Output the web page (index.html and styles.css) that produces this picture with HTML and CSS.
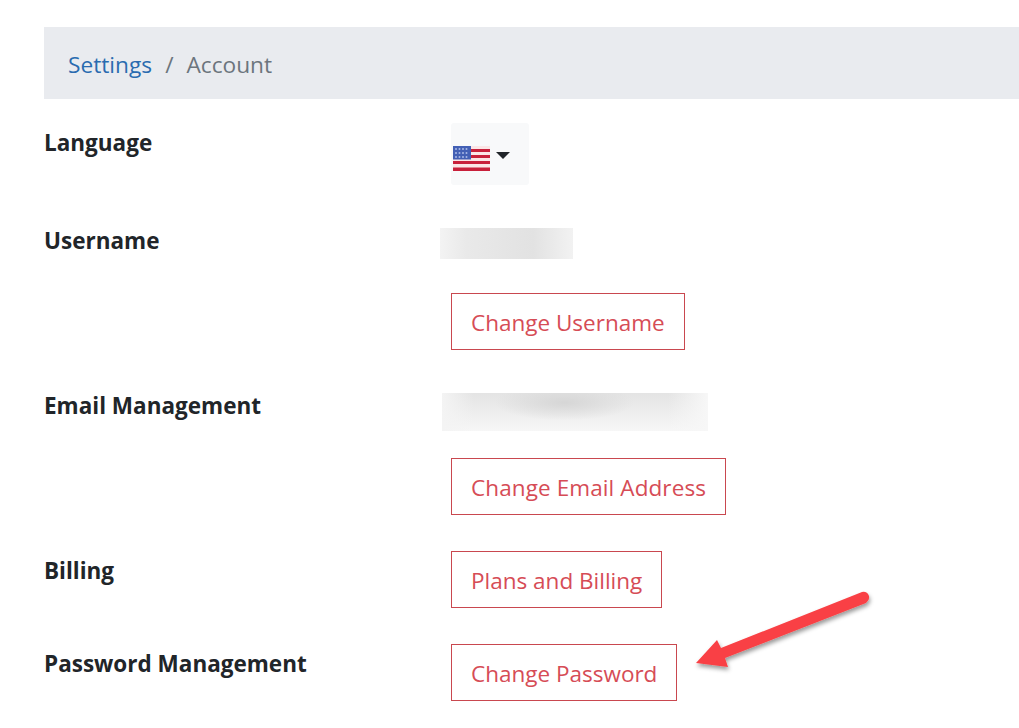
FILE: index.html
```html
<!DOCTYPE html>
<html lang="en">
<head>
  <meta charset="UTF-8">
  <meta name="viewport" content="width=device-width, initial-scale=1.0">
  <title>Account Settings</title>
  <link rel="stylesheet" href="styles.css">
</head>
<body>
  <div class="page">
    <nav class="breadcrumb">
      <a class="crumb-link" href="#">Settings</a>
      <span class="crumb-sep">/</span>
      <span class="crumb-current">Account</span>
    </nav>

    <div class="settings">
      <div class="row row-language">
        <div class="label">Language</div>
        <div class="value">
          <button class="lang-button">
            <svg class="flag" viewBox="0 0 37 25" width="37" height="25">
              <rect width="37" height="25" fill="#fbe6e6"/>
              <rect y="3" width="37" height="3" fill="#c8203a"/>
              <rect y="9" width="37" height="3" fill="#c8203a"/>
              <rect y="15" width="37" height="3" fill="#c8203a"/>
              <rect y="21.500" width="37" height="3.500" fill="#c8203a"/>
              <rect width="18" height="13.500" fill="#4360b5"/>
              <g fill="#a9b9e6">
                <circle cx="3" cy="3" r="1"/><circle cx="6.500" cy="3" r="1"/><circle cx="10" cy="3" r="1"/><circle cx="13.500" cy="3" r="1"/>
                <circle cx="3" cy="7" r="1"/><circle cx="6.500" cy="7" r="1"/><circle cx="10" cy="7" r="1"/><circle cx="13.500" cy="7" r="1"/>
                <circle cx="3" cy="11" r="1"/><circle cx="6.500" cy="11" r="1"/><circle cx="10" cy="11" r="1"/><circle cx="13.500" cy="11" r="1"/>
              </g>
            </svg>
            <span class="caret"></span>
          </button>
        </div>
      </div>

      <div class="row row-username">
        <div class="label">Username</div>
        <div class="value">
          <div class="blur blur-username"></div>
          <a class="btn" href="#">Change Username</a>
        </div>
      </div>

      <div class="row row-email">
        <div class="label">Email Management</div>
        <div class="value">
          <div class="blur blur-email"></div>
          <a class="btn btn-email" href="#">Change Email Address</a>
        </div>
      </div>

      <div class="row row-billing">
        <div class="label">Billing</div>
        <div class="value">
          <a class="btn" href="#">Plans and Billing</a>
        </div>
      </div>

      <div class="row row-password">
        <div class="label">Password Management</div>
        <div class="value">
          <a class="btn" href="#">Change Password</a>
        </div>
      </div>
    </div>

    <svg class="arrow" viewBox="0 0 1019 728" width="1019" height="728">
      <defs>
        <filter id="arrow-shadow" x="-10%" y="-20%" width="125%" height="150%">
          <feDropShadow dx="1" dy="3" stdDeviation="2" flood-color="#000" flood-opacity="0.4"/>
        </filter>
      </defs>
      <path d="M696 663 L717 640 L721 648 L862 592 Q867 591 869 596 Q870 600 866 603 L725 658 L728 667 Z" fill="#f94144" filter="url(#arrow-shadow)"/>
    </svg>
  </div>
</body>
</html>
```

FILE: styles.css
```css
body {
  margin: 0;
  background: #fff;
  font-family: "Open Sans", "Noto Sans", sans-serif;
  color: #212529;
}
.page {
  position: relative;
  width: 1019px;
  height: 728px;
  overflow: hidden;
  padding: 27px 0 0 44px;
  box-sizing: border-box;
}
.breadcrumb {
  display: flex;
  align-items: center;
  gap: 13px;
  height: 72px;
  padding: 2px 0 0 24px;
  box-sizing: border-box;
  background: #e9ebef;
  font-size: 22.700px;
}
.crumb-link {
  color: #2a6bb0;
  text-decoration: none;
}
.crumb-sep,
.crumb-current {
  color: #6c757d;
}
.row {
  display: grid;
  grid-template-columns: 407px 1fr;
}
.label {
  font-size: 22.500px;
  font-weight: 700;
  line-height: 32px;
}
.value {
  display: flex;
  flex-direction: column;
  align-items: flex-start;
}
.row-language {
  padding-top: 24px;
  height: 103px;
  box-sizing: border-box;
}
.row-language .label {
  padding-top: 4px;
}
.row-username {
  height: 165px;
  padding-top: 24px;
  box-sizing: border-box;
}
.row-username .label {
  margin-top: -1px;
}
.row-email {
  height: 184px;
  padding-top: 26px;
  box-sizing: border-box;
}
.row-email .label {
  margin-top: -3px;
}
.row-billing {
  height: 93px;
  box-sizing: border-box;
}
.row-billing .label,
.row-password .label {
  padding-top: 4px;
}
.lang-button {
  display: flex;
  align-items: center;
  width: 78px;
  height: 62px;
  padding: 8px 0 0 2px;
  border: none;
  background: #f8f9fa;
  border-radius: 3px;
}
.flag {
  display: block;
}
.caret {
  margin: -6px 0 0 6px;
  border-top: 7px solid #212529;
  border-left: 7.500px solid transparent;
  border-right: 7.500px solid transparent;
}
.blur {
  margin-left: -11px;
}
.blur-username {
  width: 133px;
  height: 31px;
  margin-top: 2px;
  margin-bottom: 34px;
  background: linear-gradient(90deg, #f3f3f3 0%, #e9e9e9 20%, #e2e2e2 70%, #f2f2f2 100%);
}
.blur-email {
  width: 266px;
  height: 38px;
  margin-left: -9px;
  margin-bottom: 27px;
  background:
    radial-gradient(ellipse 70px 18px at 46% 25%, #d6d6d6, transparent),
    linear-gradient(90deg, #f4f4f4 0%, transparent 12%, transparent 85%, #f7f7f7 100%),
    linear-gradient(180deg, #e4e4e4 0%, #f7f7f7 100%);
}
.btn {
  display: inline-flex;
  align-items: center;
  height: 57px;
  padding: 2px 19px 0;
  box-sizing: border-box;
  border: 1px solid #c9484f;
  color: #d64c56;
  font-size: 22.500px;
  text-decoration: none;
  white-space: nowrap;
}
.btn-email {
  letter-spacing: 0.100px;
}
.arrow {
  position: absolute;
  left: 0;
  top: 0;
  pointer-events: none;
}
```
